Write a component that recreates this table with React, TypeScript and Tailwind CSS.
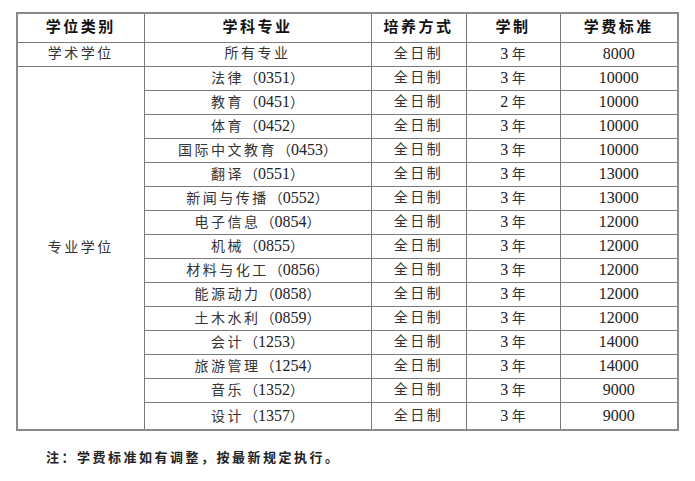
const rows: [string, string, string][] = [
  ['法律（0351）', '3', '10000'],
  ['教育（0451）', '2', '10000'],
  ['体育（0452）', '3', '10000'],
  ['国际中文教育（0453）', '3', '10000'],
  ['翻译（0551）', '3', '13000'],
  ['新闻与传播（0552）', '3', '13000'],
  ['电子信息（0854）', '3', '12000'],
  ['机械（0855）', '3', '12000'],
  ['材料与化工（0856）', '3', '12000'],
  ['能源动力（0858）', '3', '12000'],
  ['土木水利（0859）', '3', '12000'],
  ['会计（1253）', '3', '14000'],
  ['旅游管理（1254）', '3', '14000'],
  ['音乐（1352）', '3', '9000'],
  ['设计（1357）', '3', '9000'],
];

const cell = 'border border-[#7a7a7a] text-center align-middle p-0 leading-none';
const zh = 'tracking-[2.5px] text-[#333]';

function Major({ text }: { text: string }) {
  // split Chinese name from the code in brackets, digits are narrower
  const m = text.match(/^(.*?)（(\d+)）$/);
  if (!m) return <span className={zh}>{text}</span>;
  return (
    <span>
      <span className={zh}>{m[1]}</span>
      <span className="text-[#333]">（</span>
      <span className="text-[16px]">{m[2]}</span>
      <span className="text-[#333]">）</span>
    </span>
  );
}

export default function App() {
  return (
    <div
      className="w-[695px] h-[481px] bg-white pt-[12px] pl-[16px] text-[#222]"
      style={{ fontFamily: '"Liberation Serif", "Noto Sans CJK SC", serif' }}
    >
      <table className="border-collapse border-2 border-[#8a8a8a] text-[14px]">
        <colgroup>
          <col className="w-[127px]" />
          <col className="w-[227px]" />
          <col className="w-[95px]" />
          <col className="w-[94px]" />
          <col className="w-[118px]" />
        </colgroup>
        <thead>
          <tr className="h-[29px]">
            {['学位类别', '学科专业', '培养方式', '学制', '学费标准'].map((h) => (
              <th key={h} className={`${cell} font-bold text-[15px] tracking-[2.5px] text-[#111]`}>
                {h}
              </th>
            ))}
          </tr>
        </thead>
        <tbody>
          <tr className="h-[24px]">
            <td className={`${cell} ${zh}`}>学术学位</td>
            <td className={`${cell} ${zh}`}>所有专业</td>
            <td className={`${cell} ${zh}`}>全日制</td>
            <td className={cell}>
              <span className="text-[16px]">3</span> <span className="text-[#333]">年</span>
            </td>
            <td className={`${cell} text-[16px]`}>8000</td>
          </tr>
          {rows.map(([major, years, fee], i) => (
            <tr key={major} className={i === rows.length - 1 ? 'h-[28px]' : 'h-[24px]'}>
              {i === 0 && (
                <td rowSpan={rows.length} className={`${cell} ${zh}`}>
                  专业学位
                </td>
              )}
              <td className={cell}>
                <Major text={major} />
              </td>
              <td className={`${cell} ${zh}`}>全日制</td>
              <td className={cell}>
                <span className="text-[16px]">{years}</span> <span className="text-[#333]">年</span>
              </td>
              <td className={`${cell} text-[16px]`}>{fee}</td>
            </tr>
          ))}
        </tbody>
      </table>
      <p className="mt-[20px] ml-[30px] text-[13px] font-bold tracking-[2.5px] text-[#222] leading-none">
        注：学费标准如有调整，按最新规定执行。
      </p>
    </div>
  );
}
